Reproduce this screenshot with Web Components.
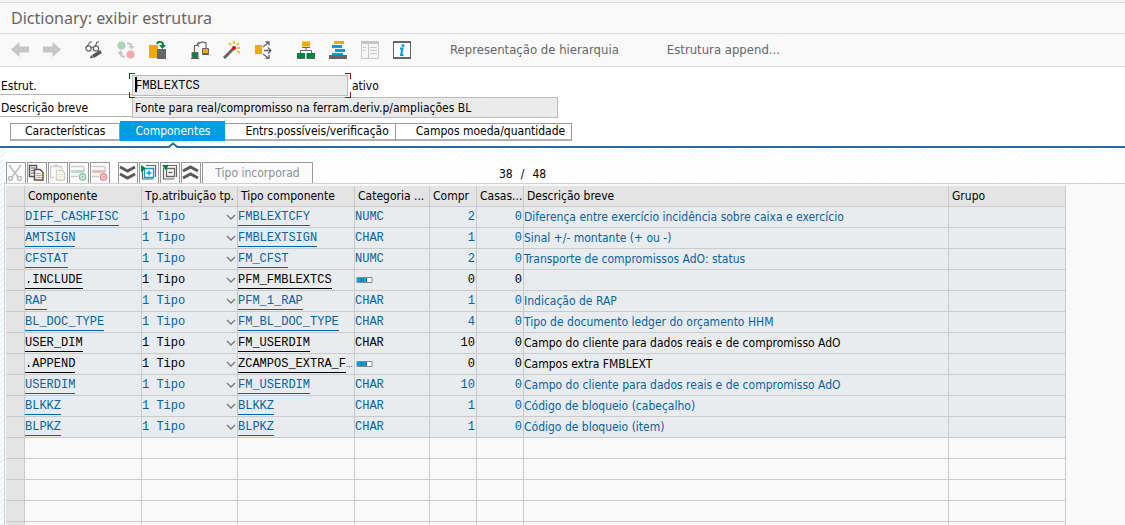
<!DOCTYPE html>
<html lang="pt-BR">
<head>
<meta charset="utf-8">
<title>Dictionary: exibir estrutura</title>
<style>
html, body { margin: 0; height: 100%; overflow: hidden; }
body { font: 12px/16px "DejaVu Sans Condensed", "DejaVu Sans", sans-serif; color: #000; background: #fff;
  --rule: #cacaca; --panel: #f9f9f9; --link: #0763a3; --accent: #009de0; --navy: #2b6a9c; --mono: "Liberation Mono", monospace; }
</style>
</head>
<body>
<sap-window>
  <sap-title slot="title">Dictionary: exibir estrutura</sap-title>
  <sap-toolbar slot="toolbar"></sap-toolbar>
  <sap-field slot="form" label="Estrut." value="FMBLEXTCS" size="small" focused>ativo</sap-field>
  <sap-field slot="form" label="Descrição breve" value="Fonte para real/compromisso na ferram.deriv.p/ampliações BL"></sap-field>
  <sap-tabs slot="tabs">
    <sap-tab>Características</sap-tab>
    <sap-tab selected>Componentes</sap-tab>
    <sap-tab wide>Entrs.possíveis/verificação</sap-tab>
    <sap-tab wide>Campos moeda/quantidade</sap-tab>
  </sap-tabs>
  <sap-table-tools current="38" total="48">Tipo incorporad</sap-table-tools>
  <sap-grid></sap-grid>
</sap-window>

<script>
const ICONS = {
  back: '<path d="M0 8.500 8.500 1v4.500H18v6H8.500V16z" fill="#c6c6c6"/>',
  forward: '<path d="M18 8.500 9.500 1v4.500H0v6h9.500V16z" fill="#c6c6c6"/>',
  glasses: '<g fill="none" stroke="#666" stroke-width="1.2"><path d="M1 7 5 1h2M10 6l2-5h2"/><circle cx="3.5" cy="7.500" r="2.6"/><circle cx="11" cy="7.500" r="2.6"/><path d="M6 7q1.200-1.200 2.500 0"/></g><path d="M5 17.500 6 14l2.500 2.500z" fill="#555"/><path d="m8 15.500 8-5" stroke="#555" stroke-width="3.500"/>',
  swap: '<circle cx="4.500" cy="4.500" r="4" fill="#a9d6ba"/><circle cx="13.500" cy="13.500" r="4" fill="#f0abae"/><g fill="none" stroke="#c8c8c8" stroke-width="2"><path d="M10 2.500h1.500q3 0 3 3.500"/><path d="M8 15.500H6.500q-3 0-3-3.500"/></g><path d="M11.500 5h6l-3 4zM.5 13h6l-3-4z" fill="#c8c8c8"/>',
  other: '<path d="M0 4h9v13H0z" fill="#f0ab00"/><path d="M8 8h9v10H8z" fill="#666"/><path d="M8 3q1-3 4-2 2 .5 2 3" fill="none" stroke="#00843d" stroke-width="2"/><path d="M10 4h7l-3.500 4z" fill="#00843d"/>',
  where: '<g fill="none" stroke="#666" stroke-width="1.200"><path d="M3.500 11V4.500H6M6 3.500 11 1l4 1v5M8 5.500 6 3.500 8 1"/></g><path d="M1 11.500h6v5H1z" fill="#00843d" stroke="#666"/><path d="M11.500 7.500h6v5h-6z" fill="#f0ab00" stroke="#666"/><path d="M0 17.500h8M11 13.500h7" stroke="#555"/>',
  wand: '<path d="m1 17 9-9" stroke="#666" stroke-width="3"/><circle cx="11" cy="7" r="2" fill="#d00"/><path d="M11 0v3M6 2l2 2M16 2l-2 2M14 7h3M14 10l3 2" stroke="#f0ab00" stroke-width="1.500"/>',
  branch: '<path d="M0 4h7v9H0z" fill="#f0ab00"/><g fill="none" stroke="#666" stroke-width="1.300"><path d="m8 6 6-5M10.500 1H14v3.500M9 9.500h7M13 6.500l3 3-3 3M8 13l6 4.500M10.500 17.500H14V14"/></g>',
  hierarchy: '<path d="M5 .5h8v5H5z" fill="#f0ab00"/><path d="M5 6.500h8M9 6v3M3.500 12V9.500h11V12" fill="none" stroke="#666"/><path d="M0 12h8v5H0zM9.500 12H18v5H9.500z" fill="#00843d"/><path d="M0 17.500h8m1.500 0H18" stroke="#666"/>',
  stack: '<path d="M5 0h10v3H5z" fill="#f0ab00"/><path d="M3 4h10v3H3zM6 8h10v3H6zM3 12h11v2H3z" fill="#009de0"/><path d="M0 14h18v4H0z" fill="#666"/>',
  columns: '<path d="M.5.500h17v17H.5z" fill="#f6f6f6" stroke="#c8c8c8"/><path d="M0 0h18v3H0z" fill="#c4c4c4"/><path d="M7.500 3v14M2 6.500h3M2 9.500h3M9 6.500h7M9 9.500h7M9 12.500h7" stroke="#c8c8c8"/>',
  info: '<path d="M.5.500h17v17H.5z" fill="#fff" stroke="#666"/><path d="M0 1h18M0 17h18" stroke="#666" stroke-width="2"/><circle cx="10" cy="4.500" r="1.500" fill="#009de0"/><path d="M7 7.500h2.500l-1.500 6.500h2.500" fill="none" stroke="#009de0" stroke-width="2"/>',
  cut: '<g fill="none" stroke="#bdbdbd" stroke-width="1.500"><path d="m2 1 9 12M14 1 5 13"/><circle cx="3.500" cy="14.500" r="2"/><circle cx="12.500" cy="14.500" r="2"/></g>',
  copy: '<path d="M1.500 1.500h7v11h-7z" fill="#fff" stroke="#555" stroke-width="1.500"/><path d="M3 4h4M3 6.500h3M3 9h3" stroke="#555"/><path d="M6.500 5.500H12l3 3V16H6.500z" fill="#fff" stroke="#555" stroke-width="1.500"/><path d="M8 9.500h5M8 11.500h6M8 13.500h6" stroke="#f0ab00" stroke-width="1.200"/>',
  paste: '<path d="M5 13.500H1.500v-11h11V5M4.500 2.500q2.500-3 5 0" fill="none" stroke="#cfcfcf" stroke-width="1.300"/><path d="M7.500 6.500H13l2.500 2.500v7h-8z" fill="#fafafa" stroke="#cfcfcf" stroke-width="1.300"/><path d="M9 10.500h5M9 13h5" stroke="#f5dfa6"/>',
  insert: '<path d="M1 2.500h13M1 12.500h7M14 3v5" stroke="#ccc" stroke-width="1.500"/><path d="M1 6h13v3H1z" fill="#b8dcc5"/><circle cx="12.500" cy="13" r="3" fill="#fff" stroke="#86c59c" stroke-width="1.500"/><path d="M11 13h3m-1.500-1.500v3" stroke="#86c59c"/>',
  remove: '<path d="M1 2.500h13M1 12.500h7M14 3v5" stroke="#ccc" stroke-width="1.500"/><path d="M1 6h13v3H1z" fill="#f0b9bb"/><circle cx="12.500" cy="13" r="3" fill="#fff" stroke="#e8868a" stroke-width="1.500"/><path d="M11 13h3" stroke="#e8868a" stroke-width="1.500"/>',
  down: '<path d="m1 3 7.500 4L16 3M1 10l7.500 4 7.500-4" fill="none" stroke="#5a5a5a" stroke-width="3"/>',
  up: '<path d="m1 7 7.500-4L16 7M1 14l7.500-4 7.500 4" fill="none" stroke="#5a5a5a" stroke-width="3"/>',
  expand: '<path d="M2.500 6v9h11M6 1.500h9.500V13" fill="none" stroke="#666" stroke-width="1.200"/><path d="M4.500 4.500h9v9h-9z" fill="#fff" stroke="#009de0" stroke-width="1.300"/><path d="M6.500 9h5M9 6.500v5" stroke="#009de0" stroke-width="1.500"/><path d="M1 1v7l5-3.500z" fill="#00843d"/>',
  collapse: '<path d="M2.500 4v11h11M7 1.500h8.500V13" fill="none" stroke="#666" stroke-width="1.200"/><path d="M5.500 4.500h8v8h-8z" fill="#fff" stroke="#666" stroke-width="1.300"/><path d="M7.500 8.500h4" stroke="#666" stroke-width="1.500"/><path d="M1 1h7L4.500 6z" fill="#00843d"/>'
};

/* Base class: stamps the class template into an open shadow root. */
class Part extends HTMLElement {
  constructor() { super(); this.attachShadow({ mode: 'open' }); }
  connectedCallback() {
    const t = document.createElement('template');
    t.innerHTML = `<style>:host,*{box-sizing:border-box}${this.constructor.css}</style>${this.view()}`;
    this.shadowRoot.replaceChildren(t.content.cloneNode(true));
  }
}

customElements.define('sap-icon', class extends Part {
  static css = ':host{display:block;width:18px;height:18px}svg{display:block}';
  view() { return `<svg width="18" height="18" viewBox="0 0 18 18" aria-hidden="true">${ICONS[this.getAttribute('name')]}</svg>`; }
});

customElements.define('sap-window', class extends Part {
  static css = `:host{display:flex;flex-direction:column;height:100vh}
    .form{display:flex;flex-direction:column;gap:1px;padding-top:8px}
    main{flex:1;min-height:0;display:flex;flex-direction:column;padding:14px 0 0 4px;
      background:linear-gradient(#ffffffb0,#fff 36px) 5px 0 no-repeat,repeating-linear-gradient(135deg,#fff 0 2px,#eaf4fa 2px 4px)}`;
  view() { return '<slot name="title"></slot><slot name="toolbar"></slot><div class="form"><slot name="form"></slot></div><slot name="tabs"></slot><main><slot></slot></main>'; }
});

customElements.define('sap-title', class extends Part {
  static css = `:host{display:block;border-top:2px solid #f3f3f3;background:var(--panel)}
    h1{margin:0;border-top:1px solid #dcdcdc;border-bottom:1px solid #dcdcdc;height:32px;padding-left:11px;font-family:"Noto Sans",sans-serif;font-size:16px;line-height:30px;font-weight:400;color:#666}`;
  view() { return '<h1><slot></slot></h1>'; }
});

customElements.define('sap-toolbar', class extends Part {
  static css = `:host{display:flex;align-items:center;height:33px;padding-left:4px;background:var(--panel);border-bottom:1px solid #dcdcdc}
    div{display:flex;margin-right:10px}
    button{width:32px;height:30px;padding:0;border:0;background:none;display:flex;align-items:center;justify-content:center;font:inherit;color:#666}
    .text{margin:0}.text button{width:auto;padding:0 24px;font-size:13px;white-space:nowrap}
    div.last{margin-right:8px}`;
  view() {
    const groups = [
      [['back', 'Voltar'], ['forward', 'Avançar']],
      [['glasses', 'Exibir/Modificar'], ['swap', 'Ativo/Inativo'], ['other', 'Outro objeto']],
      [['where', 'Lista de utilizações'], ['wand', 'Ativar'], ['branch', 'Verificar']],
      [['hierarchy', 'Hierarquia'], ['stack', 'Pilha'], ['columns', 'Lista'], ['info', 'Documentação']]
    ];
    return groups.map((g, i) => `<div class="${i === 3 ? 'last' : ''}">${g.map(([n, l]) => `<button type="button" aria-label="${l}"><sap-icon name="${n}"></sap-icon></button>`).join('')}</div>`).join('') +
      '<div class="text"><button type="button">Representação de hierarquia</button><button type="button">Estrutura append...</button></div>';
  }
});

customElements.define('sap-field', class extends Part {
  static css = `:host{display:flex;height:21px}
    label{width:132px;height:20px;padding:3px 0 0 1px;border-bottom:1px solid #b4b4b4;white-space:nowrap}
    .box{position:relative;width:426px}
    :host([size=small]) .box{width:216px}
    input{display:block;width:100%;height:100%;margin:0;padding:0 2px;border:1px solid #bbb;background:#ebebeb;font:inherit;color:inherit;border-radius:0;outline:0}
    :host([focused]) input{font-family:var(--mono)}
    .brackets{display:none}
    :host([focused]) .brackets{display:block;position:absolute;inset:-2px -3px;pointer-events:none;--c:linear-gradient(#a00,#a00);
      background:var(--c) 0 0/6px 1px,var(--c) 0 0/1px 6px,var(--c) 100% 0/6px 1px,var(--c) 100% 0/1px 6px,var(--c) 0 100%/6px 1px,var(--c) 0 100%/1px 6px,var(--c) 100% 100%/6px 1px,var(--c) 100% 100%/1px 6px;background-repeat:no-repeat}
    .brackets::after{content:"";position:absolute;left:6px;top:4px;width:2px;height:15px;background:#000}
    :host([focused]) .box{z-index:1}
    .note{padding:3px 0 0 4px}`;
  view() { return `<label for="f">${this.getAttribute('label')}</label><div class="box"><input id="f" readonly value="${this.getAttribute('value')}"><span class="brackets"></span></div><span class="note"><slot></slot></span>`; }
});

customElements.define('sap-tabs', class extends Part {
  static css = `:host{display:flex;align-items:flex-end;padding:3px 0 5px 10px;height:30px;border-bottom:2px solid var(--navy)}`;
  view() { return '<slot></slot>'; }
});

customElements.define('sap-tab', class extends Part {
  static css = `:host{display:block;position:relative}
    button{display:block;height:18px;padding:0 14px;border:1px solid #999;border-left-width:0;border-bottom:2px solid #b0b0b0;background:#fff;font:inherit;color:inherit;line-height:15px;white-space:nowrap}
    :host(:first-child) button{border-left-width:1px}
    :host([wide]) button{padding:0 6px 0 20px}
    :host([selected]) button{height:20px;padding:0 15px;border:0;background:var(--accent);color:#fff;line-height:20px}
    svg{position:absolute;left:50%;bottom:-7px;margin-left:-6px;display:none}
    :host([selected]) svg{display:block}`;
  view() { return '<button type="button"><slot></slot></button><svg width="12" height="6" viewBox="0 0 12 6"><path d="M2 6h8L6 2z" fill="#fff"/><path d="m1 5.500 5-4 5 4" fill="none" stroke="#2b6a9c" stroke-width="2"/></svg>'; }
});

customElements.define('sap-table-tools', class extends Part {
  static css = `:host{display:flex;height:21px;padding-left:2px}
    div{display:flex;gap:1px;margin-right:8px}
    button{width:20px;height:21px;padding:0;border:1px solid #999;border-bottom:0;background:#fbfbfb;display:flex;align-items:center;justify-content:center;font:inherit;color:#8a8f99}
    .wide{width:111px}
    output{display:flex;gap:8px;margin-left:178px;padding-top:4px}`;
  view() {
    const b = (n, l) => `<button type="button" aria-label="${l}"><sap-icon name="${n}"></sap-icon></button>`;
    return `<div>${b('cut', 'Recortar')}${b('copy', 'Copiar')}${b('paste', 'Colar')}${b('insert', 'Inserir linha')}${b('remove', 'Eliminar linha')}</div>
      <div>${b('down', 'Última página')}${b('expand', 'Expandir')}${b('collapse', 'Comprimir')}${b('up', 'Primeira página')}<button type="button" class="wide"><slot></slot></button></div>
      <output><span>${this.getAttribute('current')}</span><span>/</span><span>${this.getAttribute('total')}</span></output>`;
  }
});

const HEAD = ['Componente', 'Tp.atribuição tp.', 'Tipo componente', 'Categoria ...', 'Compr', 'Casas...', 'Descrição breve', 'Grupo'];
const ROWS = [
  ['DIFF_CASHFISC', 'FMBLEXTCFY', 'NUMC', 2, 'Diferença entre exercício incidência sobre caixa e exercício'],
  ['AMTSIGN', 'FMBLEXTSIGN', 'CHAR', 1, 'Sinal +/- montante (+ ou -)'],
  ['CFSTAT', 'FM_CFST', 'NUMC', 2, 'Transporte de compromissos AdO: status'],
  ['.INCLUDE', 'PFM_FMBLEXTCS', '', 0, '', true],
  ['RAP', 'PFM_1_RAP', 'CHAR', 1, 'Indicação de RAP'],
  ['BL_DOC_TYPE', 'FM_BL_DOC_TYPE', 'CHAR', 4, 'Tipo de documento ledger do orçamento HHM'],
  ['USER_DIM', 'FM_USERDIM', 'CHAR', 10, 'Campo do cliente para dados reais e de compromisso AdO', true],
  ['.APPEND', 'ZCAMPOS_EXTRA_F...', '', 0, 'Campos extra FMBLEXT', true],
  ['USERDIM', 'FM_USERDIM', 'CHAR', 10, 'Campo do cliente para dados reais e de compromisso AdO'],
  ['BLKKZ', 'BLKKZ', 'CHAR', 1, 'Código de bloqueio (cabeçalho)'],
  ['BLPKZ', 'BLPKZ', 'CHAR', 1, 'Código de bloqueio (item)']
];

customElements.define('sap-grid', class extends Part {
  static css = `:host{display:block;flex:1;min-height:0;overflow:hidden;border:1px solid #d0d0d0;border-width:1px 0 0 1px;padding:2px 0 0 1px;background:var(--panel)}
    table{table-layout:fixed;width:calc(100% - 59px);border-collapse:separate;border-spacing:0}
    th,td{height:21px;padding:0;border:solid var(--rule);border-width:0 1px 1px 0;text-align:left;font-weight:400;line-height:16px;white-space:nowrap;overflow:hidden}
    thead th{background:#e4e4e4;padding:0 0 0 3px}
    tbody th{background:#e4e4e4}
    tr.on{color:var(--link)}tr.on.dark{color:#000}
    tr.on td{background:#e8ecef}
    .mono,select{font-family:var(--mono)}
    .num{text-align:right;padding-right:1px}
    a{display:inline-block;color:inherit;text-decoration:none;border-bottom:1px solid;line-height:15px}
    .more{font:8px "Liberation Sans",sans-serif}
    .pick{display:flex;align-items:center;justify-content:space-between}
    select{appearance:none;flex:1;margin:0 -12px 0 0;padding:0;border:0;background:none;font-size:12px;line-height:16px;color:inherit;border-radius:0}
    svg{display:block}
    .c0{width:19px}.c1,.c3,.c8{width:117px}.c2{width:96px}.c4{width:75px}.c5,.c6{width:47px}`;
  view() {
    const link = t => { const cut = t.endsWith('...'); const s = cut ? t.slice(0, -3) : t; return `<a href="#${s}">${s}</a>${cut ? '<span class="more">...</span>' : ''}`; };
    const body = ROWS.map(([c, t, k, n, d, dark]) => `<tr class="on${dark ? ' dark' : ''}"><th scope="row"></th>
      <td class="mono">${link(c)}</td>
      <td><span class="pick"><select aria-label="Tp.atribuição tp. ${c}"><option>1 Tipo</option></select><svg width="12" height="8" viewBox="0 0 12 8"><path d="m2 2 4 4 4-4" fill="none" stroke="#777" stroke-width="1.300"/></svg></span></td>
      <td class="mono">${link(t)}</td>
      <td class="mono">${k || '<svg width="18" height="6" viewBox="0 0 18 6"><path d="M2 .5h15v5H2z" fill="#fff" stroke="#888"/><path d="M2 1h10v4H2z" fill="#009de0"/><path d="M6.500 1v4M11.500 1v4" stroke="#2b6a9c"/></svg>'}</td>
      <td class="num mono">${n}</td><td class="num mono">0</td><td>${d}</td><td></td></tr>`).join('');
    const blank = `<tr><th></th>${'<td></td>'.repeat(8)}</tr>`.repeat(5);
    return `<table><colgroup>${[0, 1, 2, 3, 4, 5, 6, 7, 8].map(i => `<col class="c${i}">`).join('')}</colgroup>
      <thead><tr><th></th>${HEAD.map(h => `<th scope="col">${h}</th>`).join('')}</tr></thead><tbody>${body}${blank}</tbody></table>`;
  }
});
</script>
</body>
</html>
